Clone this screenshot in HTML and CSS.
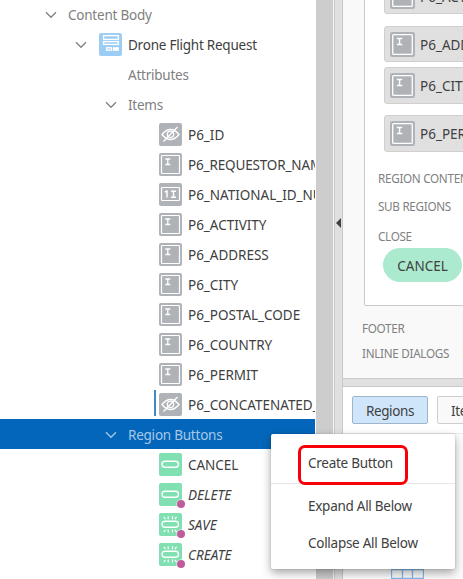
FILE: index.html
```html
<!DOCTYPE html>
<html lang="en">
<head>
<meta charset="utf-8">
<title>Page Designer</title>
<link rel="stylesheet" href="styles.css">
</head>
<body>
<svg class="defs" aria-hidden="true">
  <symbol id="chev" viewBox="0 0 12 8"><path d="M1 1.3 6 6.3 11 1.3" fill="none" stroke="currentColor" stroke-width="1.3"/></symbol>
  <symbol id="hidden" viewBox="0 0 23 23"><rect width="23" height="23" rx="2" fill="#afb3b7"/><g fill="none" stroke="#fff" stroke-width="1.3"><path d="M3 11.5Q7 6.5 11.5 6.5T20 11.5Q16 16.5 11.5 16.5T3 11.5Z"/><circle cx="11.5" cy="11.3" r="3.2"/><path d="M4.5 18.5 18.5 4"/></g></symbol>
  <symbol id="text" viewBox="0 0 23 23"><rect width="23" height="23" rx="2" fill="#afb3b7"/><rect x="2.5" y="2.5" width="18" height="18" rx=".8" fill="none" stroke="#fff" stroke-width="1.2"/><path d="M6.3 6h5M6.3 11.5h5M8.8 6v6" fill="none" stroke="#fff" stroke-width="1.3"/></symbol>
  <symbol id="number" viewBox="0 0 23 23"><rect width="23" height="23" rx="2" fill="#afb3b7"/><rect x="2.5" y="4.5" width="18" height="13" rx=".8" fill="none" stroke="#fff" stroke-width="1.2"/><path d="M5.8 9 8 8v6.5M12 8.2h5M12 14.2h5M14.5 8v6" fill="none" stroke="#fff" stroke-width="1.4"/></symbol>
  <symbol id="form" viewBox="0 0 23 23"><rect width="23" height="23" rx="2" fill="#9ccdf5"/><g fill="none" stroke="#fff" stroke-width="1.3"><rect x="4.6" y="2.6" width="14.8" height="3.8"/><rect x="4.6" y="8.6" width="14.8" height="2.8"/><rect x="7.6" y="14.8" width="5" height="2.4"/></g><rect x="14" y="14.2" width="5.8" height="3.6" fill="#fff"/></symbol>
  <symbol id="button" viewBox="0 0 23 23"><rect width="23" height="23" rx="2" fill="#81e0b2"/><rect x="3" y="8.3" width="16.5" height="6" rx="3" fill="none" stroke="#fff" stroke-width="1.4"/></symbol>
  <symbol id="hot" viewBox="0 0 23 23"><use href="#button"/><path d="M9.2 3.3v3M13.5 3.3v3M4.8 3.8 6.5 6M17.6 3.8 15.8 6M9.2 16.5v3M13.5 16.5v3M6.5 16.8 4.8 19M15.8 16.8 17.6 19" stroke="#fff" stroke-width="1.2"/></symbol>
</svg>
<div class="app">
  <div class="tree">
    <div class="row level-1"><svg class="chev"><use href="#chev"/></svg><span class="label">Content Body</span></div>
    <div class="row level-2"><svg class="chev"><use href="#chev"/></svg><svg class="icon"><use href="#form"/></svg><span class="label dark">Drone Flight Request</span></div>
    <div class="row level-3"><span class="gap"></span><span class="label">Attributes</span></div>
    <div class="row level-3"><svg class="chev"><use href="#chev"/></svg><span class="label">Items</span></div>
    <div class="row leaf"><svg class="icon"><use href="#hidden"/></svg><span class="label">P6_ID</span></div>
    <div class="row leaf tight"><svg class="icon"><use href="#text"/></svg><span class="label">P6_REQUESTOR_NAME</span></div>
    <div class="row leaf"><svg class="icon"><use href="#number"/></svg><span class="label">P6_NATIONAL_ID_NUMBER</span></div>
    <div class="row leaf"><svg class="icon"><use href="#text"/></svg><span class="label">P6_ACTIVITY</span></div>
    <div class="row leaf"><svg class="icon"><use href="#text"/></svg><span class="label">P6_ADDRESS</span></div>
    <div class="row leaf"><svg class="icon"><use href="#text"/></svg><span class="label">P6_CITY</span></div>
    <div class="row leaf"><svg class="icon"><use href="#text"/></svg><span class="label">P6_POSTAL_CODE</span></div>
    <div class="row leaf"><svg class="icon"><use href="#text"/></svg><span class="label">P6_COUNTRY</span></div>
    <div class="row leaf"><svg class="icon"><use href="#text"/></svg><span class="label">P6_PERMIT</span></div>
    <div class="row leaf changed"><svg class="icon"><use href="#hidden"/></svg><span class="label">P6_CONCATENATED_ID</span></div>
    <div class="row level-3 selected"><svg class="chev"><use href="#chev"/></svg><span class="label">Region Buttons</span></div>
    <div class="row leaf"><svg class="icon"><use href="#button"/></svg><span class="label">CANCEL</span></div>
    <div class="row leaf cond"><svg class="icon"><use href="#button"/></svg><span class="dot"></span><span class="label">DELETE</span></div>
    <div class="row leaf cond"><svg class="icon"><use href="#hot"/></svg><span class="dot"></span><span class="label">SAVE</span></div>
    <div class="row leaf cond"><svg class="icon"><use href="#hot"/></svg><span class="dot"></span><span class="label">CREATE</span></div>
  </div>
  <div class="scrollbar"></div>
  <div class="splitter"><svg class="arrow" viewBox="0 0 5 10"><path d="M5 0v10L0 5z" fill="#404040"/></svg></div>
  <div class="main">
    <div class="layout">
      <div class="card">
        <div class="item first"><svg class="item-icon" viewBox="0 0 23 23"><use href="#text"/></svg><span>P6_ACTIVITY</span></div>
        <div class="item second"><svg class="item-icon" viewBox="0 0 23 23"><use href="#text"/></svg><span>P6_ADDRESS</span></div>
        <div class="item third"><svg class="item-icon" viewBox="0 0 23 23"><use href="#text"/></svg><span>P6_CITY</span></div>
        <div class="item fourth"><svg class="item-icon" viewBox="0 0 23 23"><use href="#text"/></svg><span>P6_PERMIT</span></div>
        <div class="slot s-content">REGION CONTENT</div>
        <div class="slot s-sub">SUB REGIONS</div>
        <div class="slot s-close">CLOSE</div>
        <div class="pill">CANCEL</div>
      </div>
      <div class="slot s-footer">FOOTER</div>
      <div class="slot s-dialogs">INLINE DIALOGS</div>
    </div>
    <div class="hsplit"></div>
    <div class="tabs"><span class="tab active">Regions</span><span class="tab">Items</span></div>
    <div class="gallery"><svg class="grid" viewBox="0 0 33 26"><path d="M0 .5h33M0 9.5h33M0 17.5h33M.5 0v26M11.5 0v26M21.5 0v26M32.5 0v26" stroke="#82b8ee" stroke-width="1.3"/></svg></div>
  </div>
</div>
<div class="menu">
  <div class="entry create">Create Button</div>
  <div class="entry">Expand All Below</div>
  <div class="entry">Collapse All Below</div>
  <div class="highlight"></div>
</div>
</body>
</html>
```
FILE: styles.css
```css
* { box-sizing: border-box; }
body { margin: 0; width: 463px; height: 579px; overflow: hidden; background: #fff; font: 13.5px/20px "Noto Sans", "Open Sans", sans-serif; color: #404040; }
.defs { position: absolute; width: 0; height: 0; }
.app { display: flex; height: 579px; overflow: hidden; }
.tree { width: 315px; flex: none; margin: -1px 1px 0 0; overflow: hidden; }
.row { height: 30px; display: flex; align-items: center; white-space: nowrap; color: #808080; letter-spacing: -.23px; }
.chev { width: 12px; height: 8px; margin: 1px 11px 0 0; color: #808080; flex: none; }
.level-1 { padding-left: 45px; }
.level-2 { padding-left: 75px; }
.level-3 { padding-left: 105px; }
.level-2 .chev { margin-right: 12px; }
.gap { width: 23px; }
.icon { width: 23px; height: 23px; margin-right: 6px; flex: none; }
.leaf { position: relative; padding-left: 159px; color: #404040; letter-spacing: -.02px; }
.tight { letter-spacing: -.15px; }
.dark { color: #404040; }
.label { padding-top: 1px; }
.changed::before { content: ""; position: absolute; left: 154px; top: 1px; width: 2px; height: 26px; background: #4189c7; }
.selected { background: #0466ba; color: #a5c8e6; }
.selected .chev { color: #a5c8e6; }
.cond { letter-spacing: .05px; }
.cond .label { font-style: italic; }
.dot { position: absolute; left: 177px; top: 21px; width: 8px; height: 8px; border-radius: 50%; background: #c05c9b; box-shadow: 0 0 0 .5px #fff; }
.scrollbar { width: 17px; background: #cdcdcd; flex: none; }
.splitter { width: 10px; flex: none; background: #e0e0e0; border-left: 1px solid #f4f4f4; border-right: 1px solid #cacaca; box-shadow: inset 1px 0 #cacaca; padding: 218px 0 0 2px; }
.arrow { width: 5px; height: 10px; display: block; }
.main { width: 120px; flex: none; overflow: hidden; }
.layout { height: 378px; background: #f9f9f9; overflow: hidden; white-space: nowrap; }
.card { margin-left: 21px; width: 140px; height: 306px; border: 1px solid #c8c8c8; border-top: 0; border-radius: 0 0 0 2px; background: #fff; padding-left: 13px; overflow: hidden; }
.item { margin-left: 6px; height: 36px; width: 130px; border: 1px solid #cfcfcf; border-radius: 3px; background: #e0e0e0; display: flex; align-items: center; padding-left: 5px; gap: 5px; }
.item span { padding-top: 1px; }
.item-icon { width: 25px; height: 25px; flex: none; }
.first { margin-top: -22px; }
.second { margin-top: 12px; }
.third { margin-top: 5px; height: 37px; }
.fourth { margin-top: 11px; height: 37px; }
.slot { font-size: 11.7px; letter-spacing: -.3px; line-height: 16px; height: 16px; color: #808080; }
.s-content { margin-top: 18px; }
.s-sub { margin-top: 12px; }
.s-close { margin-top: 14px; }
.pill { margin: 4px 0 0 5px; width: 79px; height: 34px; border-radius: 17px; background: #abeace; text-align: center; line-height: 36px; }
.s-footer { margin: 14px 0 0 19px; }
.s-dialogs { margin: 9px 0 0 19px; }
.hsplit { height: 9px; background: #e0e0e0; border-top: 1px solid #cacaca; border-bottom: 1px solid #cacaca; }
.tabs { height: 47px; border-bottom: 1px solid #ebebeb; display: flex; gap: 9px; padding: 9px 0 0 9px; }
.tab { flex: none; width: 76px; height: 28px; border: 1px solid #cfcfcf; border-radius: 2px; background: #f9f9f9; line-height: 29px; padding-left: 13px; letter-spacing: -.4px; }
.active { background: #cfe5fa; border-color: #9eb6cd; }
.gallery { height: 145px; background: #fcfcfc; padding: 135px 0 0 48px; }
.grid { width: 33px; height: 26px; display: block; }
.menu { position: absolute; left: 271px; top: 434px; width: 184px; height: 135px; background: #fff; border-radius: 2px; box-shadow: 0 4px 10px rgba(0,0,0,.34), 0 0 2px rgba(0,0,0,.2); white-space: nowrap; letter-spacing: -.27px; }
.entry { height: 37px; line-height: 37px; padding-left: 37px; }
.create { height: 50px; line-height: 59px; border-bottom: 1px solid #e6e6e6; margin-bottom: 4px; }
.highlight { position: absolute; left: 27px; top: 11px; width: 110px; height: 40px; border: 3px solid #f80008; border-radius: 7px; }
```
